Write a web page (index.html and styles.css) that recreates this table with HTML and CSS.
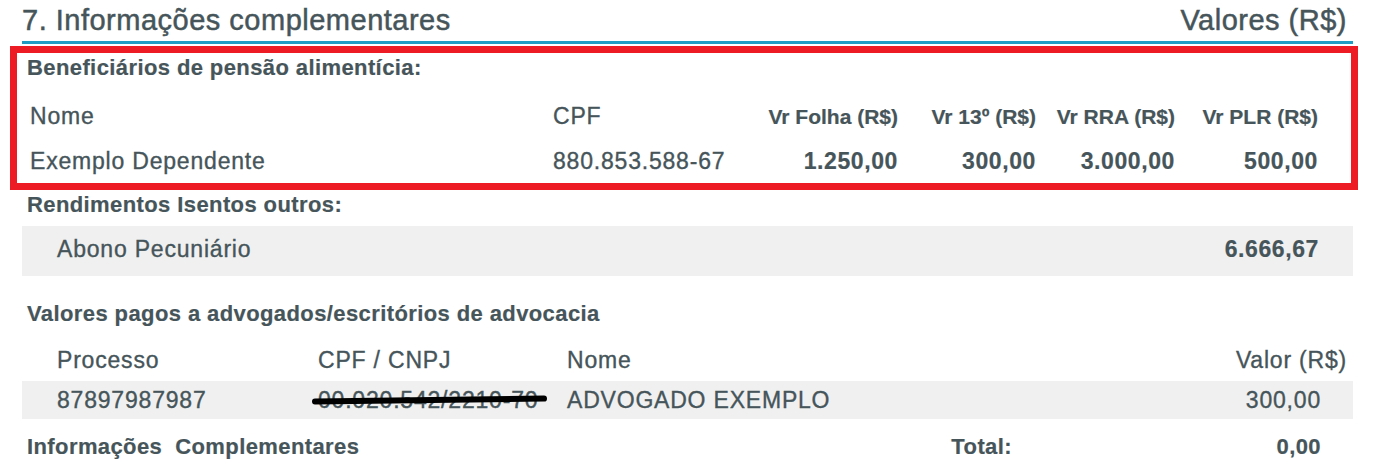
FILE: index.html
```html
<!DOCTYPE html>
<html lang="pt-BR">
<head>
<meta charset="utf-8">
<title>Informações complementares</title>
<link rel="stylesheet" href="styles.css">
</head>
<body>
<main class="sheet">
  <header class="sheet-head">
    <h1 class="sheet-title">7. Informações complementares</h1>
    <span class="sheet-unit">Valores (R$)</span>
  </header>

  <section class="highlight">
    <h2 class="label">Beneficiários de pensão alimentícia:</h2>
    <div class="benef-grid">
      <div class="benef-row">
        <span>Nome</span>
        <span>CPF</span>
        <span class="th num">Vr Folha (R$)</span>
        <span class="th num">Vr 13º (R$)</span>
        <span class="th num">Vr RRA (R$)</span>
        <span class="th num">Vr PLR (R$)</span>
      </div>
      <div class="benef-row">
        <span>Exemplo Dependente</span>
        <span>880.853.588-67</span>
        <span class="val num">1.250,00</span>
        <span class="val num">300,00</span>
        <span class="val num">3.000,00</span>
        <span class="val num">500,00</span>
      </div>
    </div>
  </section>

  <h2 class="label">Rendimentos Isentos outros:</h2>
  <div class="band isentos">
    <span>Abono Pecuniário</span>
    <span class="val">6.666,67</span>
  </div>

  <h2 class="label label-gap">Valores pagos a advogados/escritórios de advocacia</h2>
  <div class="adv-row adv-head">
    <span>Processo</span>
    <span>CPF / CNPJ</span>
    <span>Nome</span>
    <span class="num">Valor (R$)</span>
  </div>
  <div class="adv-row band adv-data">
    <span>87897987987</span>
    <span><span class="redacted">00.020.542/2210-70<span class="redact-bar"></span></span></span>
    <span>ADVOGADO EXEMPLO</span>
    <span class="num">300,00</span>
  </div>

  <div class="total-row">
    <h2 class="label">Informações&nbsp; Complementares</h2>
    <span class="label total-label">Total:</span>
    <span class="label total-val">0,00</span>
  </div>
</main>
</body>
</html>
```

FILE: styles.css
```css
* { box-sizing: border-box; margin: 0; padding: 0; }

body {
  background: #ffffff;
  font-family: "Liberation Sans", Arial, Helvetica, sans-serif;
  color: #46555a;
  -webkit-text-stroke: 0.35px #46555a;
}

.sheet {
  margin-left: 22px;
  width: 1331px;
}

.sheet-head {
  display: flex;
  justify-content: space-between;
  align-items: flex-end;
  height: 44px;
  border-bottom: 3px solid #1e9cc3;
}

.sheet-title,
.sheet-unit {
  font-size: 29px;
  font-weight: 400;
  letter-spacing: 0.5px;
  line-height: 41px;
  -webkit-text-stroke: 0.5px #46555a;
}

.sheet-unit { margin-right: 6px; }

.highlight {
  margin: 2px -5px 0 -12px;
  border: 7px solid #ed1c24;
  padding-left: 10px;
}

.label {
  font-size: 22px;
  font-weight: 700;
  letter-spacing: 0.4px;
  line-height: 30px;
  padding-left: 5px;
  -webkit-text-stroke: 0.2px #46555a;
}

.highlight .label {
  padding-left: 0;
  margin-bottom: 11px;
}

.benef-grid {
  padding-left: 3px;
}

.benef-row {
  display: grid;
  grid-template-columns: 523px 207px 138px 138px 139px 143px;
  align-items: baseline;
  font-size: 23px;
  letter-spacing: 0.8px;
  line-height: 26px;
  padding: 9px 0;
}

.num { text-align: right; }

.th {
  font-size: 21px;
  font-weight: 700;
  letter-spacing: 0;
  -webkit-text-stroke: 0.2px #46555a;
}

.val {
  font-size: 23px;
  font-weight: 700;
  letter-spacing: 0.6px;
  -webkit-text-stroke: 0.2px #46555a;
}

.band {
  background: #f0f0f0;
}

.isentos {
  display: flex;
  justify-content: space-between;
  align-items: baseline;
  margin-top: 6px;
  height: 50px;
  padding: 10px 34px 0 35px;
  font-size: 23px;
  letter-spacing: 0.8px;
  line-height: 26px;
}

.label-gap { margin-top: 23px; }

.adv-row {
  display: grid;
  grid-template-columns: 261px 249px 1fr auto;
  align-items: baseline;
  font-size: 23px;
  letter-spacing: 0.8px;
  line-height: 26px;
  padding-left: 35px;
}

.adv-head {
  margin-top: 18px;
  padding-right: 6px;
}

.adv-data {
  margin-top: 8px;
  height: 38px;
  padding-top: 6px;
  padding-right: 32px;
}

.redacted {
  position: relative;
}

.redact-bar {
  position: absolute;
  left: -6px;
  top: 10px;
  width: 235px;
  height: 6px;
  border-radius: 3px;
  background: #000000;
  transform: rotate(-0.7deg);
}

.total-row {
  display: flex;
  align-items: baseline;
  margin-top: 13px;
}

.total-row .label { padding-left: 5px; }

.total-row .total-label {
  margin-left: auto;
  padding-left: 0;
}

.total-row .total-val {
  width: 341px;
  text-align: right;
  padding-left: 0;
  padding-right: 32px;
}
```
